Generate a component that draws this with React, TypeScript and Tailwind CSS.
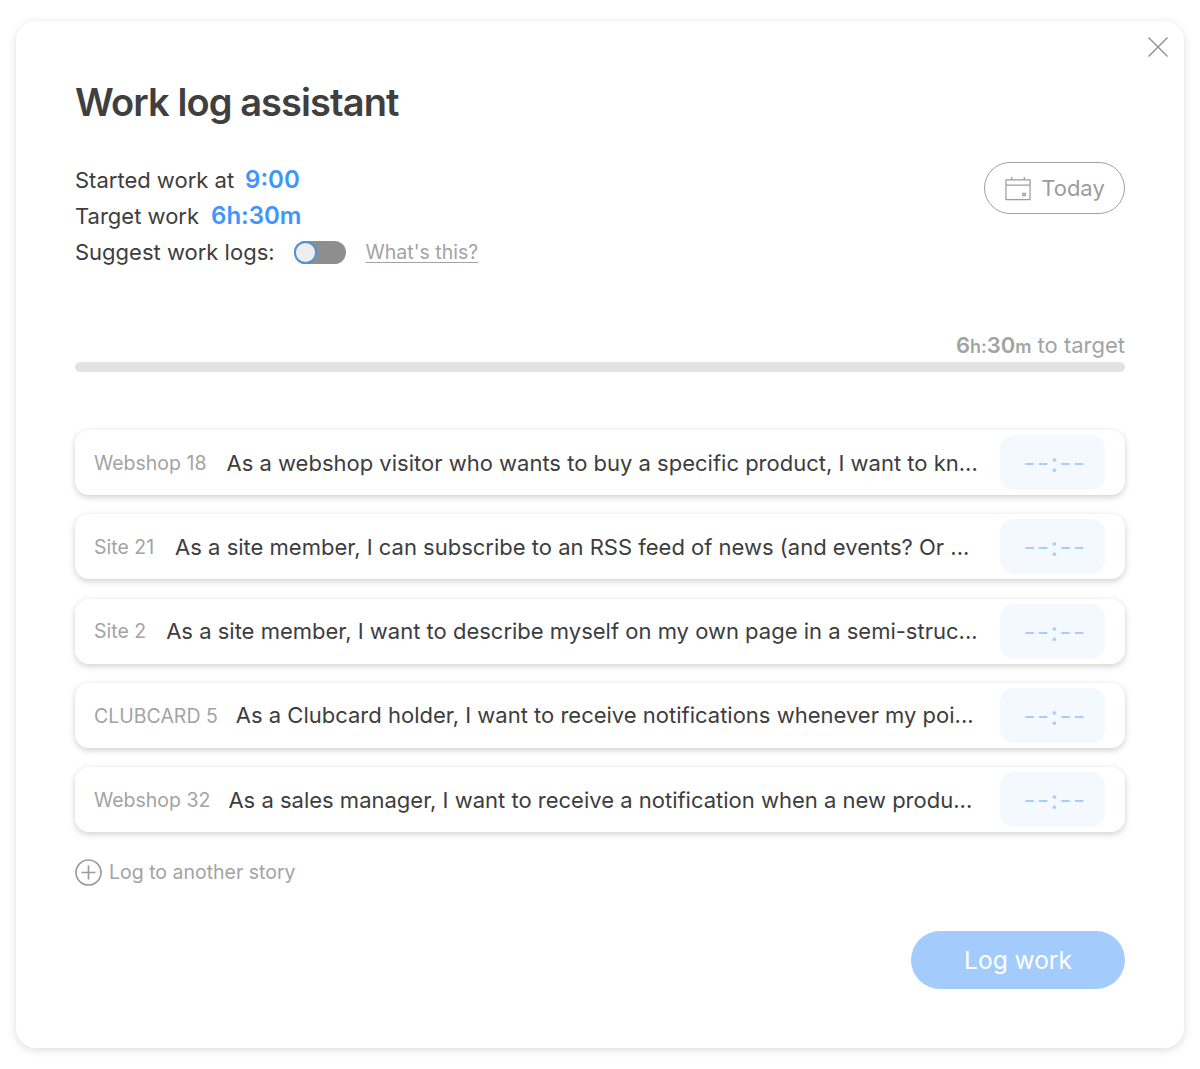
import React from "react";

const rows = [
  ["Webshop 18", "As a webshop visitor who wants to buy a specific product, I want to kn...", "ml-[20px]"],
  ["Site 21", "As a site member, I can subscribe to an RSS feed of news (and events? Or ...", "ml-[21px]"],
  ["Site 2", "As a site member, I want to describe myself on my own page in a semi-struc...", "ml-[20px]"],
  ["CLUBCARD 5", "As a Clubcard holder, I want to receive notifications whenever my poi...", "ml-[18px]"],
  ["Webshop 32", "As a sales manager, I want to receive a notification when a new produ...", "ml-[18px]"],
];

export default function App() {
  return (
    <div className="h-[1069px] w-[1200px] bg-white pt-[21px] pl-4 font-['Inter',sans-serif] text-[#3d3d3d]">
      <div className="relative h-[1027px] w-[1168px] rounded-[20px] bg-white px-[59px] pt-[56px] shadow-[0_2px_8px_rgba(0,0,0,0.14)]">
        <button className="absolute right-[15px] top-[15px] text-[#8f8f8f]">
          <svg width="22" height="22" viewBox="0 0 22 22" fill="none" stroke="currentColor" strokeWidth="1.4">
            <path d="M1.5 1.5 20.5 20.5M20.5 1.5 1.5 20.5" />
          </svg>
        </button>

        <h1 className="text-[38px] font-semibold leading-[50px] tracking-[-0.9px] text-[#3f3f3f]">Work log assistant</h1>

        <div className="mt-[35px] flex items-start justify-between">
          <div className="text-[22px] leading-[36px]">
            <div className="flex items-baseline">
              <span>Started work at</span>
              <span className="ml-[11px] text-[24px] font-semibold text-[#3d96ff]">9:00</span>
            </div>
            <div className="flex items-baseline">
              <span>Target work</span>
              <span className="ml-[12px] text-[24px] font-semibold text-[#3d96ff]">6h:30m</span>
            </div>
            <div className="flex items-center">
              <span>Suggest work logs:</span>
              <div className="ml-[19px] flex h-[23px] w-[52px] rounded-full bg-[#8e8e8e]">
                <div className="h-[23px] w-[23px] rounded-full border-2 border-[#4f94dc] bg-[#eeeeee]" />
              </div>
              <a className="ml-[20px] text-[19.5px] text-[#a3a3a3] underline underline-offset-[3px]">What's this?</a>
            </div>
          </div>
          <button className="flex h-[52px] w-[141px] items-center justify-center gap-[10px] rounded-full border-[1.5px] border-[#a0a0a0] pl-[1px] text-[22px] text-[#9c9c9c]">
            <svg width="26" height="26" viewBox="0 0 27 26" fill="none" stroke="#9c9c9c" strokeWidth="1.3">
              <path d="M1 4.5H26V25H1ZM1 10H26M7 1.5V4.5M20 1.5V4.5M18.5 18.5H21V21H18.5Z" />
            </svg>
            Today
          </button>
        </div>

        <div className="mt-[57px] flex items-baseline justify-end text-[22px] leading-[36px] text-[#a3a3a3]">
          <span className="text-[22px] font-semibold">6</span>
          <span className="text-[18px] font-semibold">h:</span>
          <span className="text-[22px] font-semibold">30</span>
          <span className="text-[18px] font-semibold">m</span>
          <span className="ml-[6px]">to target</span>
        </div>
        <div className="mt-[-3px] h-[10px] rounded-full bg-[#e3e3e3]" />

        <div className="mt-[58px] flex flex-col gap-[19.25px]">
          {rows.map(([id, text, gap]) => (
            <div key={id} className="flex h-[65px] items-center rounded-[14px] bg-white pl-[19px] pr-5 shadow-[0_2px_6px_rgba(0,0,0,0.2)]">
              <span className="mt-[2px] shrink-0 text-[19.5px] text-[#a3a3a3]">{id}</span>
              <span className={`${gap} mt-[1px] flex-1 whitespace-nowrap text-[22px] text-[#3d3d3d]`}>{text}</span>
              <div className="flex h-[55px] w-[105px] shrink-0 items-center justify-center rounded-[14px] bg-[#f4f9ff] pl-[5px] text-[26px] font-normal tracking-[1.5px] text-[#a6cdfc]">
                --:--
              </div>
            </div>
          ))}
        </div>

        <div className="mt-[26px] flex items-center gap-[7px] text-[19.5px] text-[#a3a3a3]">
          <svg width="27" height="27" viewBox="0 0 27 27" fill="none" stroke="#9c9c9c" strokeWidth="1.7">
            <circle cx="13.5" cy="13.5" r="12.5" />
            <path d="M13.5 6.5V20.5M6.5 13.5H20.5" />
          </svg>
          Log to another story
        </div>

        <div className="mt-[44px] flex justify-end">
          <button className="h-[58px] w-[214px] rounded-full bg-[#a3ccfd] text-[24.5px] text-white">Log work</button>
        </div>
      </div>
    </div>
  );
}
